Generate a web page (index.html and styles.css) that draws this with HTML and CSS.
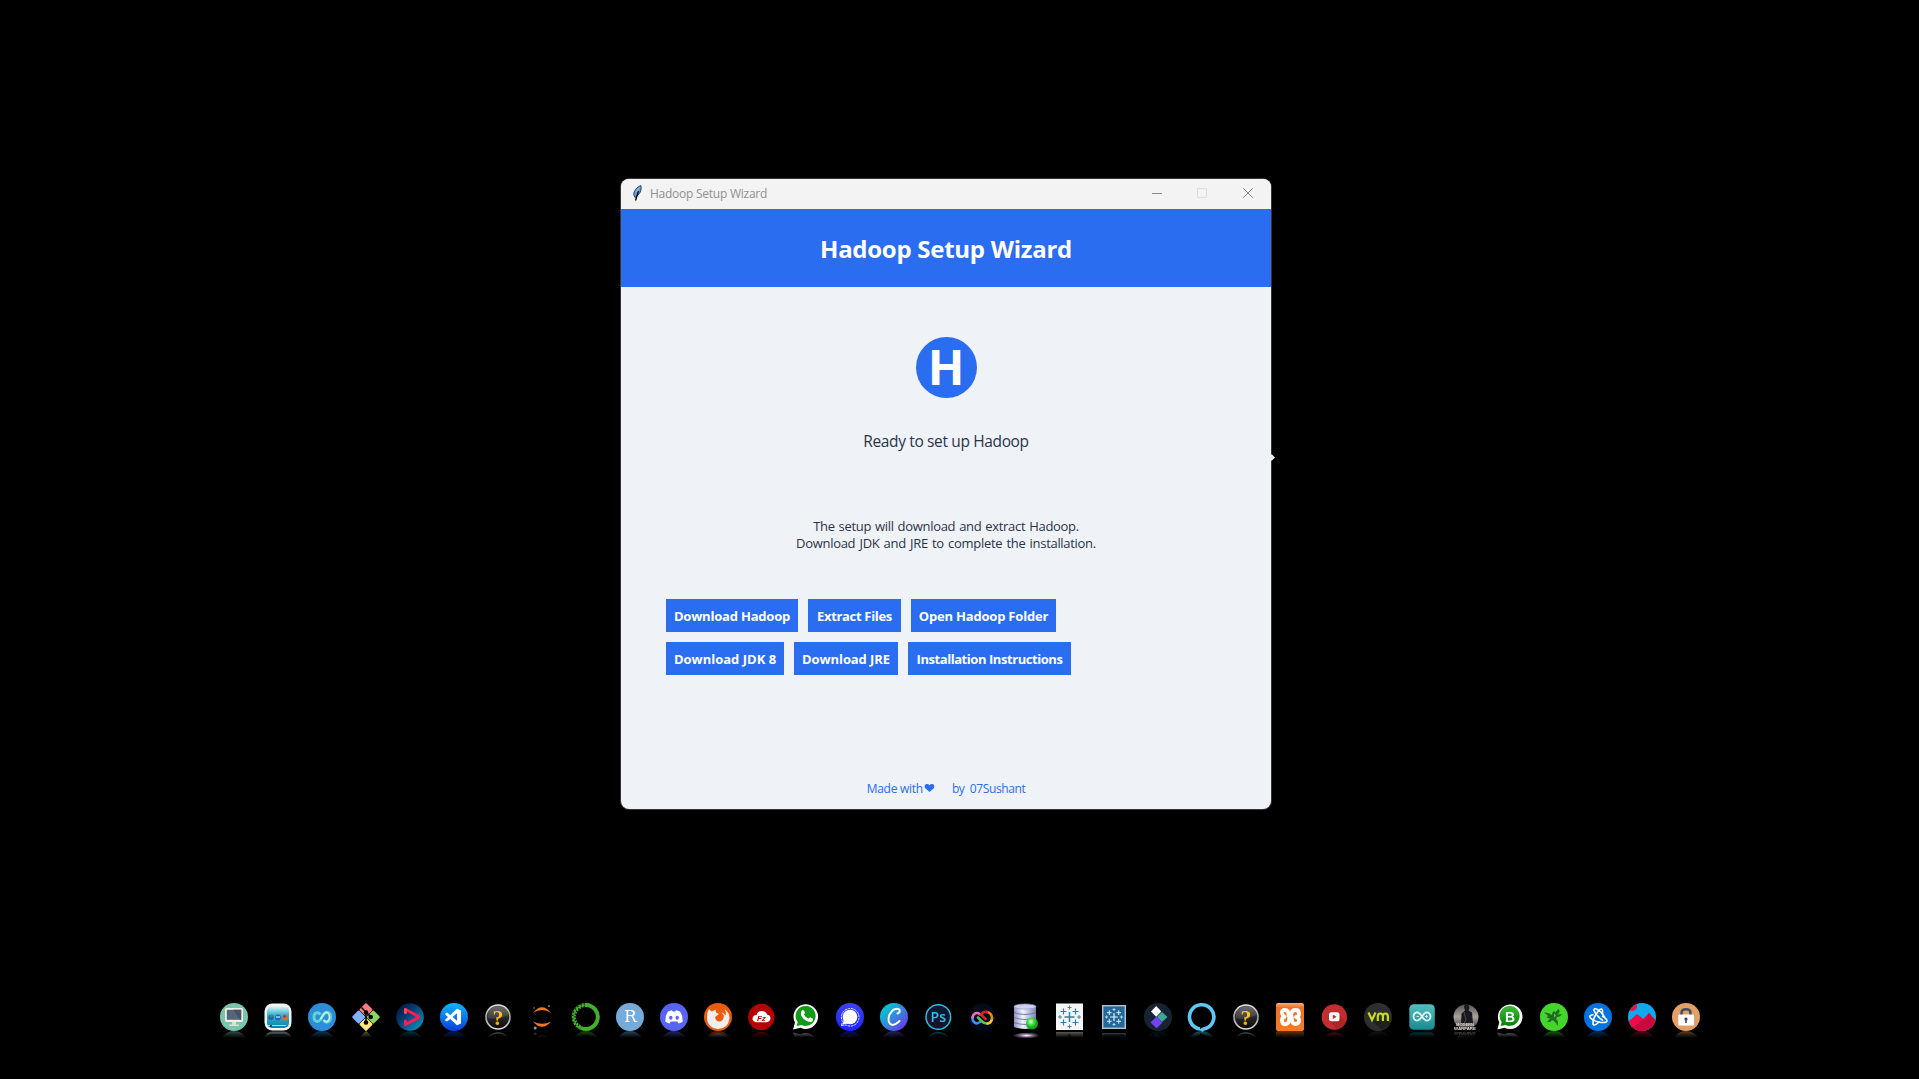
FILE: index.html
```html
<!DOCTYPE html>
<html lang="en">
<head>
<meta charset="utf-8">
<title>Hadoop Setup Wizard</title>
<link rel="stylesheet" href="styles.css">
</head>
<body>
<main class="window">
  <div class="titlebar">
    <svg class="feather" viewBox="0 0 9 16"><path d="M7.800.5C4 2 1 5.500.7 9.500L2 12.500L5.500 9.500C8 7 8.800 3 7.800.500z" fill="#5a9fe6" stroke="#222" stroke-width=".8"/><path d="M5.500 6L2.500 15.500" stroke="#000" stroke-width="1.300"/><path d="M6.300 2.500L3 7" stroke="#a8d0f5"/></svg>
    <span class="caption">Hadoop Setup Wizard</span>
    <div class="controls">
      <svg viewBox="0 0 10 10"><path d="M0 5.500H10" stroke="#8b8b8b"/></svg>
      <svg viewBox="0 0 10 10"><rect x=".5" y=".5" width="9" height="9" rx=".5" fill="none" stroke="#dedede"/></svg>
      <svg class="close" viewBox="0 0 10 10"><path d="M.2.2L9.800 9.800M9.800.2L.2 9.800" stroke="#858585"/></svg>
    </div>
  </div>
  <header class="banner"><h1>Hadoop Setup Wizard</h1></header>
  <section class="content">
    <div class="logo"><span>H</span></div>
    <p class="status">Ready to set up Hadoop</p>
    <p class="info"><span class="l1">The setup will download and extract Hadoop.</span><br><span class="l2">Download JDK and JRE to complete the installation.</span></p>
    <div class="actions">
      <div class="row"><button class="b1">Download Hadoop</button><button class="b2">Extract Files</button><button class="b3">Open Hadoop Folder</button></div>
      <div class="row"><button class="b4">Download JDK 8</button><button class="b5">Download JRE</button><button class="b6">Installation Instructions</button></div>
    </div>
    <footer class="credit"><span class="made">Made with</span><svg viewBox="0 0 10 8"><path d="M5 8L.5 4C-.5 1.500 1 0 2.500 0Q4 0 5 1.200Q6 0 7.500 0C9 0 10.500 1.500 9.500 4z" fill="#2a6df1"/></svg><span class="by">by&nbsp; 07Sushant</span></footer>
  </section>
</main>
<svg class="cursor" viewBox="0 0 4 7"><path d="M0 .5H1L4 3.500L1 6.500H0z" fill="#eee"/></svg>

<svg class="defs" width="0" height="0">
  <defs>
    <linearGradient id="vs" x2="0" y2="1"><stop stop-color="#0db8f8"/><stop offset="1" stop-color="#0b3ddb"/></linearGradient>
    <linearGradient id="arrow" x1="0" y1="0" x2="1" y2="1"><stop stop-color="#0a1030"/><stop offset=".4" stop-color="#073a70"/><stop offset="1" stop-color="#12a0c8"/></linearGradient>
    <linearGradient id="canva" x1="0" y1="0" x2="1" y2="1"><stop offset=".15" stop-color="#05c6cc"/><stop offset=".55" stop-color="#3a80dc"/><stop offset="1" stop-color="#7a20ee"/></linearGradient>
    <linearGradient id="signal" x2="0" y2="1"><stop stop-color="#3c43ee"/><stop offset="1" stop-color="#1b24ff"/></linearGradient>
    <linearGradient id="sea" x2="0" y2="1"><stop stop-color="#e6f6fa"/><stop offset=".4" stop-color="#35b5cd"/><stop offset="1" stop-color="#0784a2"/></linearGradient>
    <linearGradient id="db" x2="1"><stop stop-color="#8d93bd"/><stop offset=".4" stop-color="#f1f4ff"/><stop offset="1" stop-color="#7b81b4"/></linearGradient>
    <radialGradient id="orb" cx=".4" cy=".35"><stop stop-color="#d8ffd0"/><stop offset=".5" stop-color="#4ee04a"/><stop offset="1" stop-color="#10a81c"/></radialGradient>
    <radialGradient id="glow"><stop stop-color="#fff"/><stop offset=".3" stop-color="#b59cc0"/><stop offset="1" stop-color="#5a3c66" stop-opacity="0"/></radialGradient>
    <linearGradient id="chrome" x2="0" y2="1"><stop stop-color="#e8e8e8"/><stop offset=".5" stop-color="#999"/><stop offset="1" stop-color="#dedede"/></linearGradient>
    <linearGradient id="dark" x2="0" y2="1"><stop stop-color="#5d5d5d"/><stop offset=".5" stop-color="#292929"/><stop offset="1" stop-color="#080808"/></linearGradient>
    <linearGradient id="gold" x2="0" y2="1"><stop stop-color="#ffd72e"/><stop offset="1" stop-color="#f09a00"/></linearGradient>
    <linearGradient id="xampp" x2="0" y2="1"><stop stop-color="#f8ae78"/><stop offset=".16" stop-color="#f07024"/><stop offset="1" stop-color="#f67a28"/></linearGradient>
    <linearGradient id="teal" x2="0" y2="1"><stop stop-color="#54bfc0"/><stop offset="1" stop-color="#168b92"/></linearGradient>
    <linearGradient id="green" x2="0" y2="1"><stop stop-color="#43b83a"/><stop offset="1" stop-color="#07820a"/></linearGradient>
    <linearGradient id="smoke" x2="0" y2="1"><stop stop-color="#555"/><stop offset=".5" stop-color="#aaa29b"/><stop offset="1" stop-color="#333"/></linearGradient>
    <symbol id="question" viewBox="0 0 28 28"><circle cx="14" cy="14" r="12" fill="url(#dark)" stroke="url(#chrome)" stroke-width="1.700"/><path d="M3.500 15Q14 17 24.500 12Q24 4 14 3.500Q4 4 3.500 15" fill="#fff" opacity=".12"/><text x="14" y="22.300" text-anchor="middle" class="glyph-q" fill="url(#gold)">?</text></symbol>
    <symbol id="plus" viewBox="-14 -14 28 28"><path d="M0-5V5M-5 0H5" stroke-width="1.500"/><g stroke-width="1.200"><path d="M-6-8.500v6M-9-5.500h6M6-8.500v6M3-5.500h6M-6 2.500v6M-9 5.500h6M6 2.500v6M3 5.500h6"/><path d="M0-11.500v4M-2-9.500h4M0 7.500v4M-2 9.500h4M-9.500-2v4M-11.500 0h4M9.500-2v4M7.500 0h4" stroke-width=".9"/></g></symbol>
  </defs>
</svg>

<nav class="dock">
  <svg viewBox="0 0 28 28"><circle cx="14" cy="14" r="14" fill="#78c4ae"/><rect x="5" y="5" width="18" height="14" rx="1.500" fill="#f3efe5"/><rect x="6.800" y="6.800" width="14.400" height="10" fill="#57657b"/><path d="M13 6.800h8.200v10H20z" fill="#47536a"/><path d="M12 19h4v2.500h3V23H9v-1.500h3z" fill="#e8dfca"/></svg>
  <svg viewBox="0 0 28 28"><rect x=".5" y=".5" width="27" height="27" rx="8" fill="#f4f4f4"/><rect x="3" y="3" width="22" height="22" rx="5" fill="url(#sea)"/><circle cx="7" cy="14.500" r="2.700" fill="#156cb5"/><path d="M5.500 13l1.500-1 1.500 1-.5 1" fill="#e05f3c"/><circle cx="14" cy="14.500" r="2.900" fill="#1c67bd"/><path d="M12 14h4" stroke="#fff"/><circle cx="21" cy="14.500" r="3" fill="#e9642b"/><circle cx="20.500" cy="13.500" r="1.200" fill="#2462a8"/><path d="M4 22.500h18" stroke="#a5dbe4"/><path d="M6 22h2v2H6z" fill="#345"/></svg>
  <svg viewBox="0 0 28 28"><circle cx="14" cy="14" r="14" fill="#2c8edb"/><path d="M12.500 11.500C9.500 8 6 10 6 14s3.500 6.500 6.500 2.500l3-5c2.500-4 7-2.500 7 2.500s-4.500 7-7 3" fill="none" stroke="#62d4d5" stroke-width="2.900"/><path d="M12.500 16.500l3-5c2.500-4 6-1.500 6 2.500s-3 6.500-6 3" fill="none" stroke="#bcf0e4" stroke-width="1.700"/></svg>
  <svg viewBox="0 0 28 28"><g transform="rotate(45 14 14)"><rect x="4" y="4" width="9.700" height="9.700" rx="1" fill="#ff7b80"/><rect x="14.300" y="4" width="9.700" height="9.700" rx="1" fill="#87d960"/><rect x="4" y="14.300" width="9.700" height="9.700" rx="1" fill="#80b3ff"/><rect x="14.300" y="14.300" width="9.700" height="9.700" rx="1" fill="#ffe680"/></g><path d="M9.500 4.500L14 9V20M14 9L19 14" fill="none" stroke="#000" stroke-width="1.500"/><circle cx="14" cy="9.500" r="2.200"/><circle cx="18.700" cy="14" r="2.300"/><circle cx="14" cy="19.500" r="2.300"/></svg>
  <svg viewBox="0 0 28 28"><circle cx="14" cy="14" r="13.800" fill="url(#arrow)"/><path d="M9.500 6.500L21.500 12.800Q23.500 14 21.500 15.200L9.500 21.500V18" fill="none" stroke="#ff1c55" stroke-width="3" stroke-linejoin="round" stroke-linecap="round"/><path d="M9.500 6.500v3" stroke="#ff4d50" stroke-width="3" stroke-linecap="round"/></svg>
  <svg viewBox="0 0 28 28"><circle cx="14" cy="14" r="14" fill="url(#vs)"/><path d="M17 5.800L21 7.500V20.500L17 22.200L10.300 15.900L7 18.400L5.200 17.500V16.500L8 14L5.200 11.500V10.500L7 9.600L10.300 12.100zM17 10.300L12.600 14L17 17.700z" fill="#fff" fill-rule="evenodd"/></svg>
  <svg viewBox="0 0 28 28"><use href="#question"/></svg>
  <svg viewBox="0 0 28 28"><path d="M5 9.800Q14-1.500 23 9.800Q14 4 5 9.800M5 18.500Q14 29 23 18.500Q14 23 5 18.500" fill="#f37726"/><circle cx="21" cy="3" r="1.100" fill="#777"/><circle cx="6" cy="5" r=".8" fill="#888"/><circle cx="7.200" cy="25" r="1.500" fill="#999"/></svg>
  <svg viewBox="0 0 28 28"><path d="M14 2A12 12 0 1 1 9 25" fill="none" stroke="#43b02a" stroke-width="4"/><path d="M14 2A12 12 0 0 0 9 25" fill="none" stroke="#43b02a" stroke-width="4"/><path d="M13 1A13 13 0 0 0 6 24.500" fill="none" stroke="#000" stroke-width="1.200" stroke-dasharray="1.200 2.300"/><path d="M13 3.500A10.700 10.700 0 0 0 7 22.500" fill="none" stroke="#000" stroke-width="1.300" stroke-dasharray="1.300 1.700"/></svg>
  <svg viewBox="0 0 28 28"><circle cx="14" cy="14" r="14" fill="#75aadb"/><text x="14.300" y="19" text-anchor="middle" class="glyph-r">R</text></svg>
  <svg viewBox="0 0 28 28"><circle cx="14" cy="14" r="14" fill="#5865f2"/><path d="M8 8.500Q10 7.500 12 7.200l.7 1.300h2.600l.7-1.300q2 .3 4 1.300 3 4.500 2.800 10-2 1.500-4.300 2l-1.200-2H10.700l-1.200 2q-2.300-.5-4.300-2Q5 13 8 8.500z" fill="#fff"/><ellipse cx="10.800" cy="14.700" rx="1.700" ry="2" fill="#5865f2"/><ellipse cx="17.200" cy="14.700" rx="1.700" ry="2" fill="#5865f2"/></svg>
  <svg viewBox="0 0 28 28"><circle cx="14" cy="14" r="14" fill="#ea5b0b"/><path d="M3.500 9.500L5 6l2.500 2.500q2.500-.5 4-2l.5 3 3 1.500-4 3 1 3q3.500 3 6.500 0 3-4-1-7.500 3.500.5 3.500 3.500Q23 10 20.500 6q5 3.500 5 9Q24.500 25.500 14 26 3 25 3 14z" fill="#eee"/></svg>
  <svg viewBox="0 0 28 28"><circle cx="13.300" cy="14" r="13.200" fill="#b50303"/><path d="M8.500 19.200q-4-.3-4-3.700Q5 12 8.500 12q1-4 5-4 4.500 0 5.500 3.500 3.500.5 3.500 4-.5 3.300-4 3.700z" fill="#fff"/><text x="13.400" y="17.700" text-anchor="middle" class="glyph-fz">Fz</text></svg>
  <svg viewBox="-.5 0 28 28"><path d="M.5 26.500l2-7A12.300 12.300 0 1 1 8 24.700z" fill="#fff"/><path d="M4 23l1.200-4A10 10 0 1 1 9 22z" fill="#139a17"/><path d="M9 8q1-1.500 2.500-.5l1 2.500-1 1.500q1.500 3 4.500 4.200l1.500-1.500 3 1.500q.5 2-1.500 3-4 1-8-3T9 8" fill="#fff"/></svg>
  <svg viewBox="0 0 28 28"><circle cx="14" cy="14" r="14" fill="url(#signal)"/><circle cx="14" cy="14" r="7.300" fill="#fff"/><path d="M6.500 21.500l1.500-5 4 4z" fill="#fff"/><path d="M5.500 22.500l1-4A8.800 8.800 0 1 1 10 22z" fill="none" stroke="#fff" stroke-width=".9" stroke-dasharray="2.500 .8"/></svg>
  <svg viewBox="0 0 28 28"><circle cx="14" cy="14" r="14" fill="url(#canva)"/><path d="M17.500 10.500Q20.500 9.500 19.500 6.800 16.500 4.300 12.500 7.500 7.500 12.500 8.700 18.500 11.500 25.500 19.500 18" fill="none" stroke="#fff" stroke-width="2" stroke-linecap="round"/></svg>
  <svg viewBox="0 0 28 28"><circle cx="14.300" cy="14" r="12.300" fill="#15142f" stroke="#23c3de" stroke-width="1.500"/><text x="14.300" y="19" text-anchor="middle" class="glyph-ps">Ps</text></svg>
  <svg viewBox="0 0 28 28"><circle cx="14" cy="14" r="13.500" fill="#030b1b"/><g fill="none" stroke-width="2.500" stroke-linecap="round"><path d="M4.500 14Q4 19.500 9 20.500L12 19" stroke="#3f8df0"/><path d="M4.500 14.500Q5.500 9.500 10 10l2 1.500" stroke="#ec72b4"/><path d="M10 14.500l3.500 3.500q3 3 6 2.500" stroke="#58c747"/><path d="M19.500 20.500q4-.5 4.500-5" stroke="#f4c928"/><path d="M24 15.500Q24 10 19 9" stroke="#f98315"/><path d="M19 9q-3.500-1-6 2.500l4.500 4.500" stroke="#e21e2a"/></g></svg>
  <svg viewBox="0 0 28 28"><path d="M2 3.500V24q11 4 22 0V3.500z" fill="url(#db)"/><ellipse cx="13" cy="3.500" rx="11" ry="2.600" fill="#cbd0f3" stroke="#8e94c1" stroke-width=".6"/><path d="M2 9.500q11 4 22 0M2 14.500q11 4 22 0M2 19.500q11 4 22 0" fill="none" stroke="#6970a0" stroke-width=".9"/><circle cx="20" cy="20.500" r="6" fill="url(#orb)"/><ellipse cx="14.500" cy="32.500" rx="14" ry="3.200" fill="url(#glow)"/></svg>
  <svg viewBox="0 0 28 28"><rect x="0" y=".5" width="27" height="26.500" fill="#f4f5f5"/><use href="#plus" x="-.5" stroke="#347da8"/></svg>
  <svg viewBox="0 0 28 28"><rect x="2.700" y="2.700" width="22.600" height="22.600" fill="#21699c" stroke="#b8c4ce" stroke-width="1.400"/><use href="#plus" x="3" y="3" width="22" height="22" stroke="#e8f3fa"/></svg>
  <svg viewBox="0 0 28 28"><circle cx="14" cy="14" r="14" fill="#182331"/><path d="M7 8.500l5.200-5.500 5.200 5.500-5.200 5.200z" fill="#fff"/><path d="M13 14l5-5L23.500 14l-5.500 5z" fill="#3aa798"/><path d="M6.500 19.500l6-6 6 6-6 5.800z" fill="#7542f1"/></svg>
  <svg viewBox="0 0 28 28"><path d="M12 26A12.200 12.200 0 1 1 17.500 25.500Q14 26 13 28" fill="none" stroke="#5cc9f5" stroke-width="3.600"/></svg>
  <svg viewBox="0 0 28 28"><use href="#question"/></svg>
  <svg viewBox="0 0 28 28"><rect width="28" height="28" rx="2" fill="url(#xampp)"/><g fill="none" stroke="#fff" stroke-width="3.800" stroke-linecap="round" stroke-linejoin="round"><path d="M12.500 11.500Q12.500 7 9 7T6 10t2.500 3.800Q5.500 14.500 6 18t3.500 3.200T13 17.500q0-2.500 3-2.500"/><path d="M15.500 10.500Q16 7 19.500 7T23 10.500t-3 3.500q3.500 1 3 4t-3.500 3T16 17.500M12.500 13h3"/></g></svg>
  <svg viewBox="0 0 28 28"><circle cx="14.300" cy="14" r="12.700" fill="#c22d2e"/><path d="M19 12l7 7q-3 7-9 7.500l-7-8.500z" fill="#9c2225" opacity=".6"/><rect x="9" y="9.300" width="10.500" height="9" rx="2.500" fill="#fff"/><path d="M12.800 11.500v4.600l3.800-2.300z" fill="#c22d2e"/></svg>
  <svg viewBox="0 0 28 28"><circle cx="14" cy="14" r="14" fill="#2d2e2e"/><path d="M24 17l2 4-8 6-10-9z" fill="#1f2020"/><g fill="none" stroke="#c8dc21" stroke-width="2.200"><path d="M4.500 9.500L8 17l3.500-7.500"/><path d="M13.800 18v-4.500q0-3 2.500-3t2.600 3V18m0-4.500q0-3 2.500-3t2.500 3V18"/></g></svg>
  <svg viewBox="0 0 28 28"><rect x="1.300" y="1.300" width="25.500" height="25.500" rx="4.500" fill="url(#teal)"/><path d="M14 13.500C9.500 6.500 5.500 10 5.500 13.500S9.500 20.500 14 13.500 22.500 10 22.500 13.500 18.500 20.500 14 13.500z" fill="none" stroke="#e8f5f4" stroke-width="1.700"/><path d="M8.500 13.500h2.500m6 0h3m-1.500-1.500v3" stroke="#e8f5f4" stroke-width=".8"/></svg>
  <svg viewBox="0 0 28 28"><circle cx="14" cy="14" r="12.500" fill="url(#smoke)"/><path d="M12 4q1-4 4-3l1.500 4-1 2.500 3.500 2 1 11H9l.5-10 3.500-3z" fill="#171a20"/><path d="M12 9l2 8-3 5" stroke="#62402f" fill="none"/><text x="13" y="23" text-anchor="middle" class="glyph-mw">MODERN</text><text x="13" y="27" text-anchor="middle" class="glyph-mw2">WARFARE</text></svg>
  <svg viewBox="-.5 0 28 28"><path d="M.8 26.500l2-7A12.300 12.300 0 1 1 8 24.700z" fill="#fff"/><path d="M4 23l1.200-4A10 10 0 1 1 9 22z" fill="url(#green)"/><text x="13.500" y="19" text-anchor="middle" class="glyph-b">B</text></svg>
  <svg viewBox="0 0 28 28"><circle cx="14" cy="14" r="14" fill="#44d62c"/><path d="M4 9.500Q9 9 12 12q0-3 2-4l1.500 1.500L18 6q2.500 1 1 4l-2 1.500L21.500 11q0 2.500-4.500 3l-1 2q3 2 1.500 7-1-3-3-4.500L12 17l-1.500 2H7l3-3.500-3.500-1 1.500-1.500Q6.500 11 4 9.500z" fill="#226b25"/><path d="M14 10.500l2 2-2 2z" fill="#44d62c"/></svg>
  <svg viewBox="0 0 28 28"><circle cx="14" cy="14" r="14" fill="#0674e0"/><g fill="none" stroke="#fff" stroke-width="1.600"><path d="M9.500 11.500Q4 12.500 6.500 15Q10 18.500 17 19.500Q24.500 20 22.500 16.500Q21 14.500 18 13"/><path d="M15.500 18.500Q10 24 9 21Q8.500 15.500 14 8.500Q17.500 4 18.500 7.500V11"/><path d="M19 17.500Q12 13 10 7.500Q9.500 5 13 6.200Q18 9 21 15"/></g></svg>
  <svg viewBox="0 0 28 28"><clipPath id="round"><circle cx="14" cy="14" r="14"/></clipPath><g clip-path="url(#round)"><path d="M0 0h28v28H0z" fill="#10a8ef"/><circle cx="4" cy="3" r="5" fill="#f10b49"/><path d="M0 19l9-8 6 5 6-6 7 8v12H0z" fill="#f00b48"/><path d="M9 11l6 5-9 8-6 1v3h20l8-10-7-8-3 6-3 1z" fill="#c80a3c"/></g></svg>
  <svg viewBox="0 0 28 28"><circle cx="14" cy="14" r="14" fill="#e3a066"/><path d="M9.500 12V10q0-3.700 4.500-3.700t4.500 3.700v2" fill="none" stroke="#3f4e62" stroke-width="2.500"/><rect x="6.300" y="11.500" width="15.700" height="11" rx=".8" fill="#fff"/><circle cx="14" cy="16" r="1.600" fill="#35465b"/><path d="M14 16v4" stroke="#35465b" stroke-width="1.500"/></svg>
</nav>
</body>
</html>
```
FILE: styles.css
```css
* { box-sizing: border-box; }
body {
  margin: 0;
  width: 100vw;
  height: 100vh;
  overflow: hidden;
  background: #000;
  display: flex;
  flex-direction: column;
  align-items: center;
  padding-top: 179px;
  font-family: "Open Sans", "Noto Sans", sans-serif;
}
h1, p { margin: 0; }
.defs { position: absolute; }
.cursor { position: absolute; left: 1271px; top: 454px; width: 4px; height: 7px; }
.window {
  flex: none;
  width: 650px;
  height: 630px;
  margin-right: 27px;
  border-radius: 8px;
  overflow: hidden;
  background: #eff3f8;
  box-shadow: 0 0 0 1px #353535;
}
.titlebar { display: flex; align-items: center; height: 30px; padding: 0 18px 0 12px; background: #f3f3f3; }
.feather { width: 9px; height: 16px; margin-top: -3px; fill: none; }
.caption { margin: -1px 0 0 8px; font-size: 12px; letter-spacing: -.25px; color: #909090; }
.controls { display: flex; gap: 35px; margin-left: auto; margin-top: -2px; }
.controls svg { width: 10px; height: 10px; }
.controls .close { margin-left: 1px; }
.banner { display: flex; align-items: center; justify-content: center; height: 78px; padding-top: 2px; background: #2a6df1; color: #fff; }
.banner h1 { font-size: 24px; line-height: 34px; font-weight: 700; letter-spacing: -.27px; white-space: nowrap; }
.content { display: flex; flex-direction: column; align-items: center; height: 522px; padding-top: 50px; color: #2c3448; }
.logo { display: flex; align-items: center; justify-content: center; width: 61px; height: 61px; border-radius: 50%; background: #2a6df1; color: #fff; font-size: 48px; font-weight: 700; line-height: 59px; padding-bottom: 2px; }
.status { height: 24px; margin-top: 31px; font-size: 15.5px; line-height: 24px; letter-spacing: -.36px; white-space: nowrap; }
.info { height: 34px; margin-top: 65px; font-size: 13px; line-height: 17px; text-align: center; white-space: nowrap; }
.l1 { letter-spacing: -.3px; word-spacing: .8px; }
.l2 { letter-spacing: -.3px; word-spacing: 1.1px; }
.actions { display: flex; flex-direction: column; gap: 10px; align-self: stretch; margin: 47px 45px 0; }
.row { display: flex; gap: 10px; }
button { height: 33px; padding: 1px 0 0; border: 0; background: #2a6df1; color: #fff; font: 700 13px/32px "Open Sans", sans-serif; white-space: nowrap; }
.b1 { width: 132px; letter-spacing: -.2px; }
.b2 { width: 93px; letter-spacing: -.33px; }
.b3 { width: 145px; letter-spacing: -.2px; }
.b4 { width: 118px; }
.b5 { width: 104px; letter-spacing: -.1px; }
.b6 { width: 163px; letter-spacing: -.44px; }
.credit { display: flex; align-items: center; height: 20px; margin-top: 103px; font-size: 12px; color: #2a6df1; white-space: nowrap; }
.credit svg { width: 11px; height: 8px; margin-left: 1px; }
.made { letter-spacing: -.27px; }
.by { margin-left: 17px; letter-spacing: -.4px; }
.dock { flex: none; display: flex; gap: 16px; margin-top: 194px; }
.dock svg { flex: none; width: 28px; height: 28px; overflow: visible; -webkit-box-reflect: below 0 linear-gradient(transparent 76%, rgba(255,255,255,.42)); }
.glyph-q { font: 700 22px "Liberation Serif", serif; }
.glyph-r { font: 17px "DejaVu Serif", serif; fill: #fff; }
.glyph-fz { font: italic 700 8px "Liberation Sans", sans-serif; fill: #b50303; }
.glyph-ps { font: 600 14px "Open Sans", sans-serif; fill: #2fc5e8; }
.glyph-b { font: 700 14px "Liberation Sans", sans-serif; fill: #fff; }
.glyph-mw, .glyph-mw2 { font: 700 4px "Liberation Sans", sans-serif; fill: #ddd; }
.glyph-mw2 { font-size: 4.400px; }
```
